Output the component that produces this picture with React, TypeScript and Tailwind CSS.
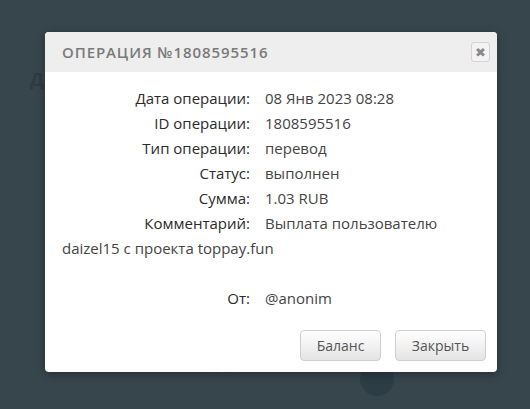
import React from 'react';

const rows: [string, string][] = [
  ['Дата операции:', '08 Янв 2023 08:28'],
  ['ID операции:', '1808595516'],
  ['Тип операции:', 'перевод'],
  ['Статус:', 'выполнен'],
  ['Сумма:', '1.03 RUB'],
];

const App: React.FC = () => {
  return (
    <div className="relative h-[409px] w-[530px] overflow-hidden bg-[#37464d] font-['Open_Sans',sans-serif]">
      {/* faint page content behind the modal */}
      <div className="absolute left-[30px] top-[66px] text-[18px] font-bold text-[#2e3b41]">Д</div>
      <div className="absolute left-[360px] top-[362px] h-[34px] w-[34px] rounded-full bg-[#2c3d45]" />
      <div className="absolute left-[210px] top-[366px] text-[12px] text-[#3f5058]">·· ·····</div>

      <div className="absolute left-[45px] top-[32px] w-[452px] overflow-hidden rounded-[4px] bg-white shadow-[0_2px_8px_rgba(0,0,0,0.35)]">
        <div className="flex h-[40px] items-center justify-between bg-[#eeeeee] pl-[17px] pr-[7px]">
          <span className="text-[15px] font-semibold tracking-[0.9px] text-[#7a7a7a]">ОПЕРАЦИЯ №1808595516</span>
          <button className="flex h-[20px] w-[19px] items-center justify-center rounded-[3px] border border-[#d4d4d4] bg-[#f3f3f3] text-[13px] leading-none text-[#8a8a8a]">
            ✖
          </button>
        </div>
        <div className="px-[17px] pb-[11px] pt-[14px] text-[15px] leading-[25px] text-[#2a2a2a]">
          {rows.map(([label, value]) => (
            <div key={label}>
              <span className="mr-[15px] inline-block w-[188px] text-right font-medium">{label}</span>
              <span className="text-[#444]">{value}</span>
            </div>
          ))}
          <div>
            <span className="mr-[15px] inline-block w-[188px] text-right font-medium">Комментарий:</span>
            <span className="text-[#444]">Выплата пользователю daizel15 с проекта toppay.fun</span>
          </div>
          <div className="h-[25px]" />
          <div>
            <span className="mr-[15px] inline-block w-[188px] text-right font-medium">От:</span>
            <span className="text-[#444]">@anonim</span>
          </div>
          <div className="mt-[19px] flex justify-end gap-[14px]">
            <button className="h-[31px] w-[81px] rounded-[4px] border border-[#cfcfcf] bg-gradient-to-b from-white to-[#e4e4e4] text-[14px] text-[#555]">
              Баланс
            </button>
            <button className="mr-[-6px] h-[31px] w-[91px] rounded-[4px] border border-[#cfcfcf] bg-gradient-to-b from-white to-[#e4e4e4] text-[14px] text-[#555]">
              Закрыть
            </button>
          </div>
        </div>
      </div>
    </div>
  );
};

export default App;
